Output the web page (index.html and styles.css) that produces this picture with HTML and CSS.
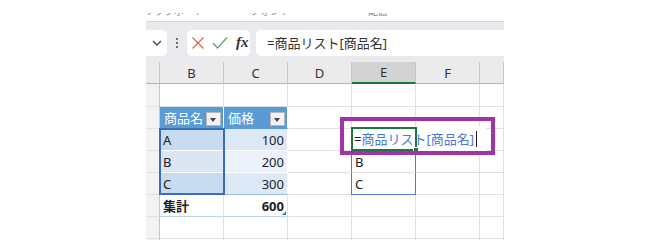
FILE: index.html
```html
<html>
<head>
	<title>商品リスト</title>
	<link rel="stylesheet" href="styles.css">
</head>
<body>
<div class="shot">
	<!-- cut-off ribbon group labels -->
	<div class="ribbon">
		<span class="lbl l1"><span>クリップボード</span></span>
		<span class="lbl l2"><span>フォント</span></span>
		<span class="lbl l3"><span>配置</span></span>
	</div>

	<!-- formula bar -->
	<div class="fbar">
		<div class="namebox">
			<svg width="10" height="6" viewBox="0 0 10 6"><path d="M1 1 L5 5 L9 1" fill="none" stroke="#444" stroke-width="1.3"/></svg>
		</div>
		<div class="dots"><i></i><i></i><i></i></div>
		<div class="fbtns">
			<svg width="14" height="14" viewBox="0 0 14 14"><path d="M1.5 1.5 L12.5 12.5 M12.5 1.5 L1.5 12.5" stroke="#e0604e" stroke-width="1.2"/></svg>
			<svg width="16" height="14" viewBox="0 0 16 14"><path d="M1 7 L5.5 12 L15 1.5" fill="none" stroke="#5e9e72" stroke-width="1.2"/></svg>
			<span class="fx">fx</span>
		</div>
		<div class="finput">=商品リスト[商品名]</div>
	</div>

	<!-- sheet grid -->
	<div class="sheet">
		<div class="grid">
			<div class="ch"></div><div class="ch">B</div><div class="ch">C</div><div class="ch">D</div><div class="ch cur">E</div><div class="ch">F</div><div class="ch"></div>

			<div class="c r1"></div><div class="c r1"></div><div class="c r1"></div><div class="c r1"></div><div class="c r1"></div><div class="c r1"></div><div class="c r1"></div>

			<div class="c"></div>
			<div class="c th">商品名<span class="flt"></span></div>
			<div class="c th">価格<span class="flt"></span></div>
			<div class="c"></div><div class="c"></div><div class="c"></div><div class="c"></div>

			<div class="c"></div>
			<div class="c tb sel">A</div>
			<div class="c tb num">100</div>
			<div class="c"></div>
			<div class="c spill edit">
				<div class="editor"><span class="eq">=</span>商品リスト[商品名]<span class="caret"></span></div>
				<div class="focus"></div>
			</div>
			<div class="c"></div><div class="c"></div>

			<div class="c"></div>
			<div class="c tb band sel">B</div>
			<div class="c tb band num">200</div>
			<div class="c"></div>
			<div class="c spill">B</div>
			<div class="c"></div><div class="c"></div>

			<div class="c"></div>
			<div class="c tb sel">C</div>
			<div class="c tb num">300</div>
			<div class="c"></div>
			<div class="c spill last">C</div>
			<div class="c"></div><div class="c"></div>

			<div class="c"></div>
			<div class="c tt">集計</div>
			<div class="c tt num">600<span class="grip"></span></div>
			<div class="c"></div><div class="c"></div><div class="c"></div><div class="c"></div>

			<div class="c"></div><div class="c"></div><div class="c"></div><div class="c"></div><div class="c"></div><div class="c"></div><div class="c"></div>
			<div class="c"></div><div class="c"></div><div class="c"></div><div class="c"></div><div class="c"></div><div class="c"></div><div class="c"></div>
		</div>
		<div class="selbox"></div>
	</div>

	<!-- annotation -->
	<div class="mark"></div>
</div>
</body>
</html>
```

FILE: styles.css
```css
body {
	margin: 0;
	background: #fff;
	font-family: "Noto Sans", "Noto Sans CJK JP", sans-serif;
	color: #222;
}

.shot {
	position: relative;
	margin-left: 146px;
	width: 358px;
	height: 240px;
	overflow: hidden;
}

/* ribbon labels, only their bottoms show */
.ribbon {
	height: 21px;
	display: flex;
	align-items: flex-start;
	overflow: hidden;
}

.lbl {
	display: block;
	margin-top: 13px;
	height: 3px;
	overflow: hidden;
	font-size: 10px;
	color: #8a8a8a;
}

.lbl span {
	display: block;
	line-height: 10px;
	margin-top: -7px;
	white-space: nowrap;
}

.l1 { margin-left: -12px; }
.l2 { margin-left: 46px; }
.l3 { margin-left: 78px; }

/* formula bar */
.fbar {
	height: 41px;
	background: #e8eaed;
	border-top: 1px solid #d3d5d8;
	box-sizing: border-box;
	display: flex;
	align-items: center;
	padding-top: 1px;
}

.namebox {
	width: 21px;
	height: 26px;
	background: #fff;
	border-radius: 0 5px 5px 0;
	display: flex;
	align-items: center;
	justify-content: flex-end;
	padding-right: 5px;
	box-sizing: border-box;
}

.dots {
	width: 20px;
	display: flex;
	flex-direction: column;
	align-items: center;
	gap: 2px;
}

.dots i {
	width: 2px;
	height: 2px;
	background: #444;
	border-radius: 1px;
}

.fbtns {
	width: 63px;
	height: 26px;
	background: #fff;
	border-radius: 5px;
	display: flex;
	align-items: center;
	padding-left: 4px;
	gap: 7px;
	box-sizing: border-box;
}

.fx {
	font-family: "Liberation Serif", "DejaVu Serif", serif;
	font-style: italic;
	font-weight: bold;
	font-size: 15px;
	color: #333;
	margin-left: 1px;
}

.finput {
	margin-left: 6px;
	flex: 1;
	height: 26px;
	background: #fff;
	border-radius: 5px 0 0 5px;
	font-size: 13px;
	line-height: 26px;
	padding-left: 11px;
	color: #333;
}

/* grid */
.sheet {
	position: relative;
}

.grid {
	display: grid;
	grid-template-columns: 14px repeat(5, 64px) 24px;
	grid-template-rows: 22px 23px repeat(7, 22px);
	font-size: 13px;
}

.ch {
	background: #ebebeb;
	border-right: 1px solid #c6c6c6;
	border-bottom: 1px solid #b4b4b4;
	display: flex;
	align-items: center;
	justify-content: center;
	color: #333;
}

.ch.cur {
	background: #d3d3d3;
	border-bottom: 2px solid #217346;
}

.c {
	border-right: 1px solid #e1e1e1;
	border-bottom: 1px solid #e1e1e1;
	display: flex;
	align-items: center;
	padding: 0 3px;
	white-space: nowrap;
	position: relative;
}

.c:nth-child(7n+1) {
	background: #f2f2f2;
	border-right-color: #c6c6c6;
}

/* table */
.th {
	background: #5b9bd5;
	color: #fff;
	border-color: #5b9bd5;
	border-right-color: #fff;
	padding-left: 4px;
}

.flt {
	position: absolute;
	right: 2px;
	top: 5px;
	width: 13px;
	height: 12px;
	background: #f3f3f3;
	border: 1px solid #b7b7b7;
}

.flt::after {
	content: "";
	position: absolute;
	left: 3px;
	top: 5px;
	border-left: 3.5px solid transparent;
	border-right: 3.5px solid transparent;
	border-top: 4px solid #444;
}

.tb {
	background: #dde9f6;
	border-bottom-color: #fff;
	border-right-color: #fff;
}

.tb.band {
	background: #eaf1fa;
}

.tb.sel {
	background: #c9dbf1;
}

.tb.band.sel {
	background: #dbe6f4;
}

.num {
	justify-content: flex-end;
}

.tt {
	font-weight: bold;
	border-top: 1px solid #9bc2e6;
	border-bottom-color: #bdd7ee;
	margin-top: -1px;
}

.grip {
	position: absolute;
	right: 1px;
	bottom: 1px;
	border-left: 4px solid transparent;
	border-bottom: 4px solid #3c78c8;
}

.selbox {
	position: absolute;
	left: 13px;
	top: 66px;
	width: 66px;
	height: 67px;
	border: 2px solid #3a6cc6;
	box-sizing: border-box;
}

/* spill range and edited cell */
.spill {
	border-left: 1px solid #4a7fd2;
	border-right: 1px solid #4a7fd2;
	margin-left: -1px;
	padding-left: 3px;
}

.spill.last {
	border-bottom-color: #4a7fd2;
}

.editor {
	position: absolute;
	left: -1px;
	top: -2px;
	height: 24px;
	width: 132px;
	background: #fff;
	padding-left: 3px;
	line-height: 24px;
	color: #4a78d8;
	z-index: 2;
}

.eq {
	color: #222;
}

.caret {
	display: inline-block;
	width: 1px;
	height: 16px;
	background: #222;
	margin-left: 2px;
	vertical-align: -3px;
}

.focus {
	position: absolute;
	left: -1px;
	top: -2px;
	width: 66px;
	height: 24px;
	border: 2px solid #217346;
	box-sizing: border-box;
	z-index: 3;
}

.focus::after {
	content: "";
	position: absolute;
	right: -4px;
	bottom: -4px;
	width: 4px;
	height: 4px;
	background: #217346;
	border: 1px solid #fff;
}

.mark {
	position: absolute;
	left: 194px;
	top: 117px;
	width: 155px;
	height: 38px;
	border: 4px solid #a133a8;
	box-sizing: border-box;
	z-index: 5;
}
```
